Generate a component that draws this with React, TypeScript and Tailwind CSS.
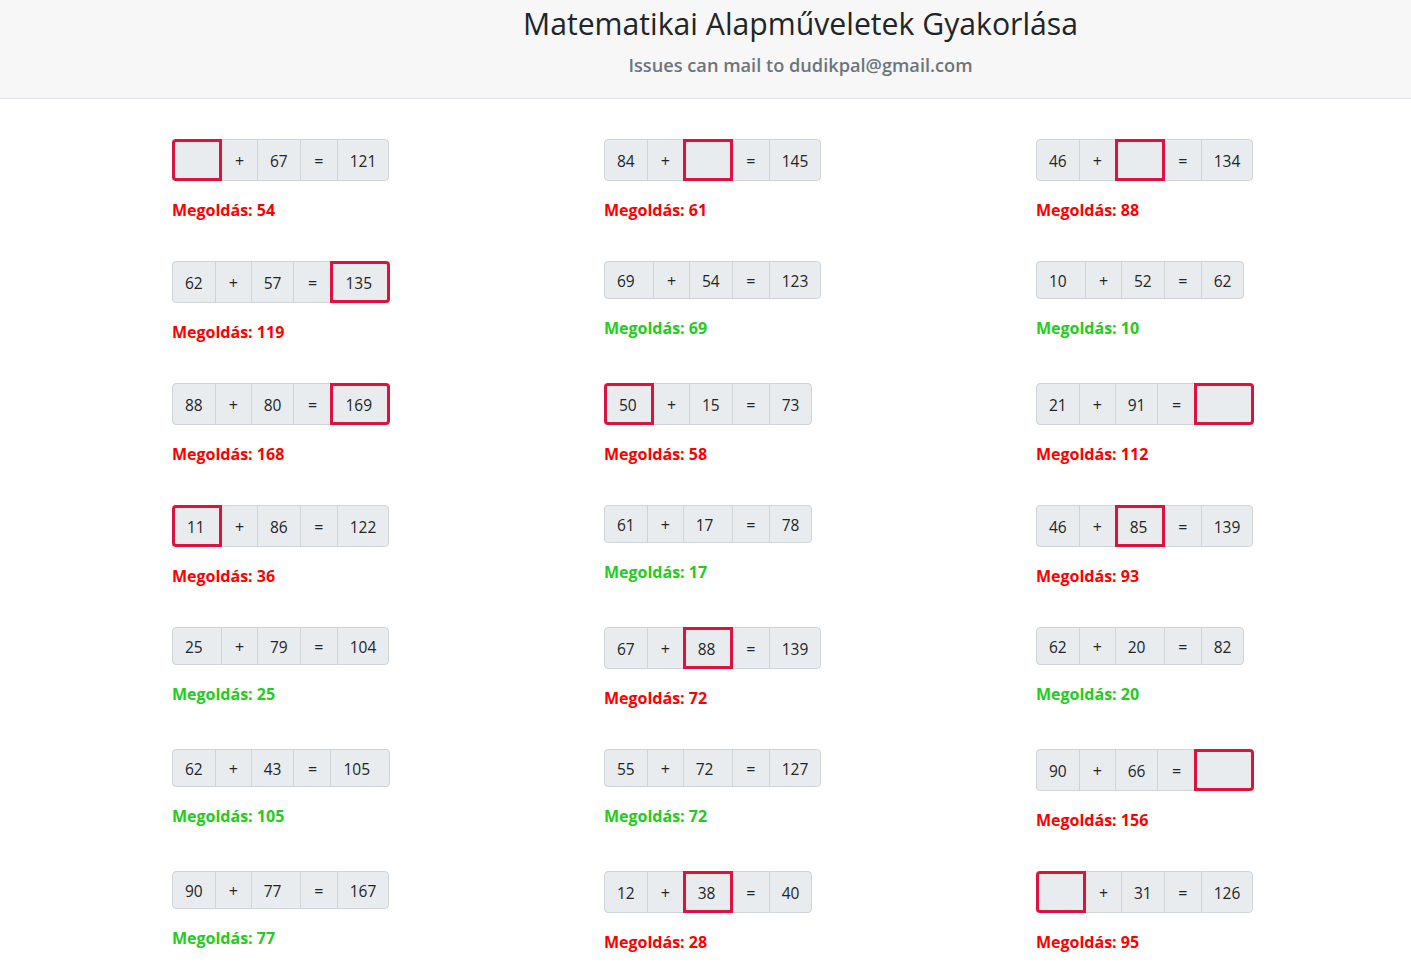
import React from "react";

type Task = {
    nums: [number, number, number];
    hole: 0 | 1 | 2;
    typed: string;
};

const COLUMNS: Task[][] = [
    [
        { nums: [54, 67, 121], hole: 0, typed: "" },
        { nums: [62, 57, 119], hole: 2, typed: "135" },
        { nums: [88, 80, 168], hole: 2, typed: "169" },
        { nums: [36, 86, 122], hole: 0, typed: "11" },
        { nums: [25, 79, 104], hole: 0, typed: "25" },
        { nums: [62, 43, 105], hole: 2, typed: "105" },
        { nums: [90, 77, 167], hole: 1, typed: "77" },
    ],
    [
        { nums: [84, 61, 145], hole: 1, typed: "" },
        { nums: [69, 54, 123], hole: 0, typed: "69" },
        { nums: [58, 15, 73], hole: 0, typed: "50" },
        { nums: [61, 17, 78], hole: 1, typed: "17" },
        { nums: [67, 72, 139], hole: 1, typed: "88" },
        { nums: [55, 72, 127], hole: 1, typed: "72" },
        { nums: [12, 28, 40], hole: 1, typed: "38" },
    ],
    [
        { nums: [46, 88, 134], hole: 1, typed: "" },
        { nums: [10, 52, 62], hole: 0, typed: "10" },
        { nums: [21, 91, 112], hole: 2, typed: "" },
        { nums: [46, 93, 139], hole: 1, typed: "85" },
        { nums: [62, 20, 82], hole: 1, typed: "20" },
        { nums: [90, 66, 156], hole: 2, typed: "" },
        { nums: [95, 31, 126], hole: 0, typed: "" },
    ],
];

const cellBase = "flex items-center border border-[#ced4da] bg-[#e9ecef] pt-[7px] pb-[5px] leading-6 text-[#212529] -ml-px first:ml-0 first:rounded-l last:rounded-r";

function Answer({ task, slot }: { task: Task; slot: 0 | 1 | 2 }) {
    const ok = task.typed === String(task.nums[task.hole]);
    const width = slot === 2 ? "w-[60px]" : "w-[50px]";
    const edge = slot === 0 ? "rounded-l" : slot === 2 ? "rounded-r" : "";
    return (
        <input
            readOnly
            value={task.typed}
            className={`${width} ${edge} relative z-10 bg-[#e9ecef] px-3 pt-[7px] pb-[5px] text-[15.5px] leading-6 text-[#212529] outline-none -ml-px first:ml-0 ${ok ? "border border-[#ced4da]" : "border-[3px] border-[#dc143c]"}`}
        />
    );
}

function Exercise({ task }: { task: Task }) {
    const ok = task.typed === String(task.nums[task.hole]);
    const slot = (i: 0 | 1 | 2) =>
        task.hole === i ? (
            <Answer task={task} slot={i} />
        ) : (
            <span className={`${cellBase} px-3 text-[15.5px]`}>{task.nums[i]}</span>
        );

    return (
        <div className="h-[122px]">
            <div className="flex w-fit items-stretch">
                {slot(0)}
                <span className={`${cellBase} w-[37px] justify-center`}>+</span>
                {slot(1)}
                <span className={`${cellBase} w-[38px] justify-center`}>=</span>
                {slot(2)}
            </div>
            <div className={`mt-[17px] font-bold leading-6 ${ok ? "text-[#22cc22]" : "text-[#ff0000]"}`}>
                Megoldás: {task.nums[task.hole]}
            </div>
        </div>
    );
}

export default function App() {
    return (
        <div className="min-h-screen bg-white text-base" style={{ fontFamily: '"Open Sans", "Noto Sans", sans-serif' }}>
            <header className="h-[99px] border-b border-[#dee2e6] bg-[#f7f7f7] pl-[190px] text-center">
                <h1 className="pt-[1px] text-[30.2px] leading-[46px] text-[#212529]">Matematikai Alapműveletek Gyakorlása</h1>
                <p className="mt-[4px] text-[18.2px] font-semibold leading-7 text-[#6c757d]">Issues can mail to dudikpal@gmail.com</p>
            </header>

            <main className="grid grid-cols-[432px_432px_432px] pl-[172px] pt-10">
                {COLUMNS.map((col, ci) => (
                    <div key={ci} className="flex flex-col">
                        {col.map((task, ti) => (
                            <Exercise key={ti} task={task} />
                        ))}
                    </div>
                ))}
            </main>
        </div>
    );
}
